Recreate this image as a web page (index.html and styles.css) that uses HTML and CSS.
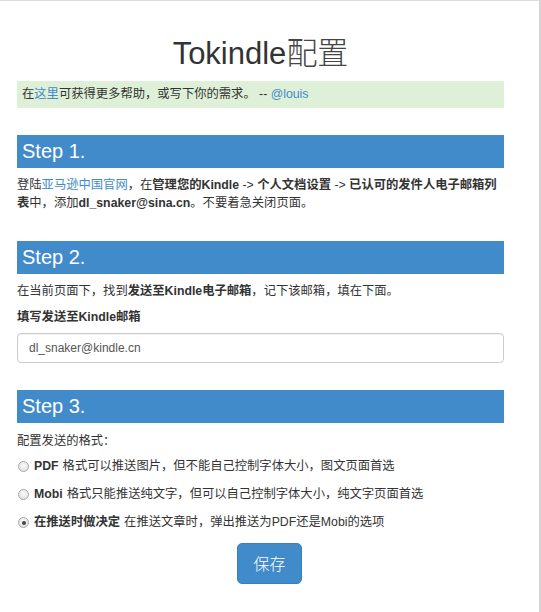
FILE: index.html
```html
<!DOCTYPE html>
<html lang="zh-CN">
<head>
<meta charset="utf-8">
<title>Tokindle配置</title>
<link rel="stylesheet" href="styles.css">
</head>
<body>
<div class="frame">
  <div class="container">
    <h1 class="title">Tokindle<span class="cjk-title">配置</span></h1>
    <div class="alert">在<a href="#">这里</a>可获得更多帮助，或写下你的需求。 -- <a href="#">@louis</a></div>

    <h2 class="step">Step 1.</h2>
    <p class="text multi">登陆<a href="#">亚马逊中国官网</a>，在<b>管理您的Kindle</b> -&gt; <b>个人文档设置</b> -&gt; <b>已认可的发件人电子邮箱列表</b>中，添加<b>dl_snaker@sina.cn</b>。不要着急关闭页面。</p>

    <h2 class="step step-gap">Step 2.</h2>
    <p class="text">在当前页面下，找到<b>发送至Kindle电子邮箱</b>，记下该邮箱，填在下面。</p>
    <label class="field-label" for="email">填写发送至Kindle邮箱</label>
    <input class="field" id="email" type="text" value="dl_snaker@kindle.cn">

    <h2 class="step step-gap2">Step 3.</h2>
    <p class="text format">配置发送的格式：</p>
    <div class="options">
      <label class="option"><input type="radio" name="fmt" class="radio"><b>PDF</b> 格式可以推送图片，但不能自己控制字体大小，图文页面首选</label>
      <label class="option"><input type="radio" name="fmt" class="radio"><b>Mobi</b> 格式只能推送纯文字，但可以自己控制字体大小，纯文字页面首选</label>
      <label class="option"><input type="radio" name="fmt" class="radio" checked><b>在推送时做决定</b> 在推送文章时，弹出推送为PDF还是Mobi的选项</label>
    </div>
    <div class="actions"><button class="btn" type="button">保存</button></div>
  </div>
</div>
</body>
</html>
```

FILE: styles.css
```css
* { box-sizing: border-box; }
html, body { margin: 0; padding: 0; background: #fff; }
body {
  font-family: "Liberation Sans", "Noto Sans CJK SC", sans-serif;
  font-size: 12.3px;
  color: #333;
}
.frame {
  width: 541px;
  height: 612px;
  border-top: 1px solid #dcdcdc;
  border-right: 2px solid #d4d4d4;
  overflow: hidden;
}
.container {
  width: 487px;
  margin-left: 17px;
  padding-top: 33px;
}
.title {
  margin: 0;
  font-size: 31px;
  line-height: 40px;
  font-weight: normal;
  text-align: center;
  color: #333;
}
.cjk-title { font-weight: 300; color: #444; }
.alert {
  margin-top: 7px;
  height: 27px;
  line-height: 27px;
  padding: 0 5px;
  background: #dff0d8;
  color: #333;
}
a { color: #428bca; text-decoration: none; }
.step {
  margin: 27px 0 0;
  height: 33px;
  line-height: 33px;
  padding-left: 5px;
  background: #428bca;
  color: #fff;
  font-size: 20px;
  font-weight: normal;
}
.step-gap { margin-top: 29px; }
.step-gap2 { margin-top: 27px; }
.text {
  margin: 9px 0 0;
  line-height: 17px;
}
.multi {
  margin-top: 8px;
  line-height: 18px;
}
b { font-weight: bold; }
.field-label {
  display: block;
  margin-top: 9px;
  line-height: 17px;
  font-weight: bold;
}
.field {
  display: block;
  width: 100%;
  height: 30px;
  margin-top: 7px;
  padding: 0 11px;
  border: 1px solid #ccc;
  border-radius: 4px;
  font-family: "Liberation Sans", sans-serif;
  font-size: 12px;
  color: #555;
  box-shadow: inset 0 1px 1px rgba(0,0,0,0.06);
}
.format { margin-top: 10px; }
.options {
  margin-top: 8px;
  display: flex;
  flex-direction: column;
  gap: 11px;
}
.option {
  display: flex;
  align-items: center;
  line-height: 17px;
  white-space: nowrap;
}
.option b { margin-right: 4px; }
.radio {
  appearance: none;
  -webkit-appearance: none;
  width: 11px;
  height: 11px;
  margin: 0 5px 0 1px;
  border: 1px solid #a8a8a8;
  border-radius: 50%;
  background: radial-gradient(circle at 50% 40%, #fbfbfb 0, #e4e4e4 70%, #d0d0d0 100%);
  position: relative;
  flex: none;
}
.radio:checked::after {
  content: "";
  position: absolute;
  left: 2.5px;
  top: 2.5px;
  width: 4px;
  height: 4px;
  border-radius: 50%;
  background: #444;
}
.actions {
  margin-top: 12px;
  padding-left: 18px;
  text-align: center;
}
.btn {
  font-family: "Noto Sans CJK SC", sans-serif;
  font-size: 16px;
  font-weight: 300;
  line-height: 23px;
  padding: 8px 15px;
  border: 1px solid #3a7fbc;
  border-radius: 5px;
  background: #428bca;
  color: #fff;
  cursor: pointer;
}
```
